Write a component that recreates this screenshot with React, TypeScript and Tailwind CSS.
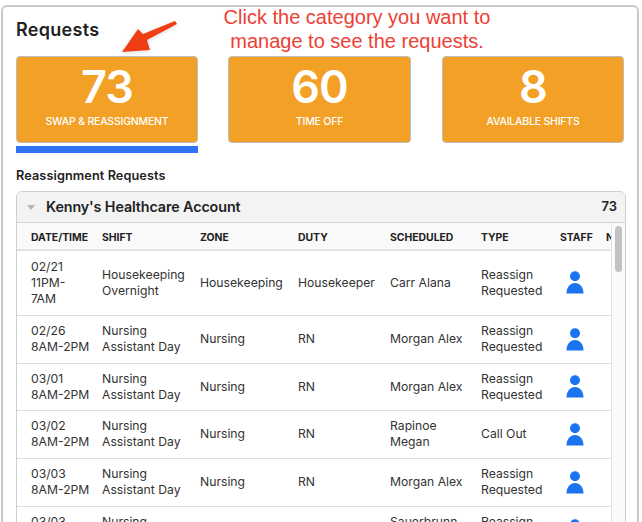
import React from "react";

const rows = [
  { d: ["02/21", "11PM-", "7AM"], s: ["Housekeeping", "Overnight"], z: "Housekeeping", u: "Housekeeper", n: ["Carr Alana"], t: ["Reassign", "Requested"], h: "h-[65px]" },
  { d: ["02/26", "8AM-2PM"], s: ["Nursing", "Assistant Day"], z: "Nursing", u: "RN", n: ["Morgan Alex"], t: ["Reassign", "Requested"], h: "h-[48px]" },
  { d: ["03/01", "8AM-2PM"], s: ["Nursing", "Assistant Day"], z: "Nursing", u: "RN", n: ["Morgan Alex"], t: ["Reassign", "Requested"], h: "h-[47px]" },
  { d: ["03/02", "8AM-2PM"], s: ["Nursing", "Assistant Day"], z: "Nursing", u: "RN", n: ["Rapinoe", "Megan"], t: ["Call Out"], h: "h-[48px]" },
  { d: ["03/03", "8AM-2PM"], s: ["Nursing", "Assistant Day"], z: "Nursing", u: "RN", n: ["Morgan Alex"], t: ["Reassign", "Requested"], h: "h-[48px]" },
  { d: ["03/03", "8AM-2PM"], s: ["Nursing", "Assistant Day"], z: "Nursing", u: "RN", n: ["Sauerbrunn", "Becky"], t: ["Reassign", "Requested"], h: "h-[48px]" },
];

const headers = ["DATE/TIME", "SHIFT", "ZONE", "DUTY", "SCHEDULED", "TYPE", "STAFF", "NOTES"];
const widths = ["w-[71px]", "w-[98px]", "w-[98px]", "w-[92px]", "w-[91px]", "w-[79px]", "w-[46px]", "w-[60px]"];

function Lines({ l }: { l: string[] }) {
  return (
    <>
      {l.map((x) => (
        <div key={x} className="whitespace-nowrap">{x}</div>
      ))}
    </>
  );
}

function Person() {
  return (
    <svg width="18" height="23" viewBox="0 0 18 23" className="block">
      <circle cx="9" cy="5.2" r="5" fill="#1a73f0" />
      <path d="M0.5 22.5 C0.5 16.5 4 12 9 12 C14 12 17.5 16.5 17.5 22.5 Z" fill="#1a73f0" />
    </svg>
  );
}

function Stat({ n, label, active, w }: { n: string; label: string; active?: boolean; w: string }) {
  return (
    <div className={`flex ${w} flex-col`}>
      <div className="flex h-[87px] flex-col items-center rounded-[4px] border border-[#bdbdbd] bg-[#f2a026] text-white">
        <div className="mt-[1px] text-[45px] leading-[58px] font-semibold tracking-[-1px]">{n}</div>
        <div className="mt-[-1px] text-[10.5px] leading-[14px] font-medium tracking-[-0.2px]">{label}</div>
      </div>
      {active && <div className="mt-[3px] h-[7px] bg-[#2f72f5]" />}
    </div>
  );
}

export default function App() {
  return (
    <div className="relative h-[522px] w-[642px] overflow-hidden bg-white font-['Inter',sans-serif] text-[#222]">
      <div className="mt-[5px] ml-[1px] h-[530px] w-[638px] rounded-[6px] border-2 border-[#c9c9c9] px-[13px]">
        <h1 className="mt-[11px] text-[18px] leading-[24px] font-semibold tracking-[0.3px] text-[#222]">Requests</h1>
        <div className="mt-[14px] flex h-[97px] items-start">
          <Stat n="73" label="SWAP & REASSIGNMENT" active w="w-[183px]" />
          <div className="ml-[30px]"><Stat n="60" label="TIME OFF" w="w-[183px]" /></div>
          <div className="ml-[31px]"><Stat n="8" label="AVAILABLE SHIFTS" w="w-[182px]" /></div>
        </div>
        <h2 className="mt-[14px] text-[12.7px] leading-[18px] font-semibold tracking-[0.1px]">Reassignment Requests</h2>
        <div className="mt-[6px] w-[610px] overflow-hidden rounded-t-[6px] border border-[#cfcfcf]">
          <div className="flex h-[31px] items-center justify-between border-b border-[#d4d4d4] bg-[#f3f3f3] pr-[8px] pl-[10px]">
            <div className="flex items-center">
              <div className="h-0 w-0 border-x-[4px] border-t-[5px] border-x-transparent border-t-[#b5b5b5]" />
              <span className="ml-[11px] text-[14.3px] font-semibold tracking-[-0.1px]">Kenny's Healthcare Account</span>
            </div>
            <span className="text-[13px] font-semibold">73</span>
          </div>
          <div className="flex">
            <div className="w-[594px] overflow-hidden">
              <table className="w-[635px] table-fixed border-collapse">
                <colgroup>
                  {widths.map((w, i) => (
                    <col key={i} className={w} />
                  ))}
                </colgroup>
                <thead>
                  <tr className="h-[27px] border-b-2 border-[#e2e2e2] bg-[#fafafa]">
                    {headers.map((h) => (
                      <th key={h} className="pt-[3px] pl-[14px] text-left text-[10.4px] font-bold whitespace-nowrap text-[#222]">{h}</th>
                    ))}
                  </tr>
                </thead>
                <tbody className="text-[12.2px] leading-[16px] text-[#333]">
                  {rows.map((r, i) => (
                    <tr key={i} className={`${r.h} border-b border-[#dedede]`}>
                      <td className="pl-[14px] align-middle"><Lines l={r.d} /></td>
                      <td className="pl-[14px] align-middle"><Lines l={r.s} /></td>
                      <td className="pl-[14px] align-middle">{r.z}</td>
                      <td className="pl-[14px] align-middle">{r.u}</td>
                      <td className="pl-[14px] align-middle"><Lines l={r.n} /></td>
                      <td className="pl-[14px] align-middle"><Lines l={r.t} /></td>
                      <td className="pl-[20px] align-middle"><Person /></td>
                      <td />
                    </tr>
                  ))}
                </tbody>
              </table>
            </div>
            <div className="flex-1 border-l border-[#e3e3e3] bg-[#fafafa] px-[3px] pt-[3px]">
              <div className="h-[46px] rounded-full bg-[#c2c2c2]" />
            </div>
          </div>
        </div>
      </div>

      <div className="absolute top-[5px] left-[190px] w-[334px] text-center font-['Liberation_Sans',sans-serif] text-[20px] leading-[24px] text-[#ee4035]">
        <div>Click the category you want to</div>
        <div>manage to see the requests.</div>
      </div>
      <svg className="absolute top-[18px] left-[120px] drop-shadow-sm" width="60" height="36" viewBox="0 0 60 36">
        <path d="M55 3 L57 6 L27 22 L30 32 L2 34 L18 11 L23 16 Z" fill="#f03e14" />
      </svg>
    </div>
  );
}
